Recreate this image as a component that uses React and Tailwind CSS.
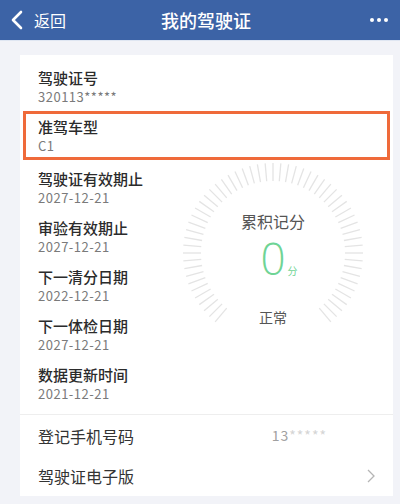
import React from 'react';

const font = { fontFamily: '"Noto Sans CJK SC", "Noto Sans", sans-serif' };

const infoRows = [
    { label: '驾驶证有效期止', value: '2027-12-21' },
    { label: '审验有效期止', value: '2027-12-21' },
    { label: '下一清分日期', value: '2022-12-21' },
    { label: '下一体检日期', value: '2027-12-21' },
    { label: '数据更新时间', value: '2021-12-21' },
];

function InfoItem({ label, value }) {
    return (
        <div className="flex flex-col">
            <span className="text-[15px] leading-[20px] font-medium text-[#2b2b2b]">{label}</span>
            <span className="text-[13px] leading-[18px] text-[#7a7a7a] tracking-[0.5px]">{value}</span>
        </div>
    );
}

function Gauge() {
    const cx = 93;
    const cy = 93;
    const ticks = [];
    for (let a = -140; a <= 140; a += 5) {
        const rad = (a * Math.PI) / 180;
        const sin = Math.sin(rad);
        const cos = Math.cos(rad);
        ticks.push(
            <line
                key={a}
                x1={cx + sin * 72}
                y1={cy - cos * 72}
                x2={cx + sin * 90}
                y2={cy - cos * 90}
                stroke="#e4e4e4"
                strokeWidth="1.3"
            />
        );
    }
    return (
        <div className="relative w-[186px] h-[186px] shrink-0">
            <svg className="absolute inset-0" width="186" height="186" viewBox="0 0 186 186">
                {ticks}
            </svg>
            <div className="relative flex flex-col items-center pt-[50px]">
                <span className="text-[16px] leading-[22px] text-[#555]">累积记分</span>
                <div className="flex items-baseline pl-[12px]">
                    <span className="text-[44px] leading-[52px] font-light text-[#6fd495]" style={{ fontFamily: '"Open Sans", sans-serif' }}>0</span>
                    <span className="text-[10px] leading-[12px] text-[#6fd495] ml-[2px]">分</span>
                </div>
                <span className="text-[14px] leading-[20px] text-[#555] mt-[23px]">正常</span>
            </div>
        </div>
    );
}

export default function App() {
    return (
        <div className="w-[400px] h-[504px] bg-[#f2f3f8] overflow-hidden" style={font}>
            {/* header */}
            <div className="h-[41px] bg-[#3c63a6] flex items-center px-[10px] text-white border-b border-[#dfe6f2]">
                <div className="flex items-center w-[90px]">
                    <svg width="14" height="20" viewBox="0 0 14 20">
                        <polyline points="11,2 3,10 11,18" fill="none" stroke="white" strokeWidth="2.6" strokeLinecap="round" strokeLinejoin="round" />
                    </svg>
                    <span className="text-[16px] ml-[10px] leading-[20px]">返回</span>
                </div>
                <div className="flex-1 text-center text-[18px] font-medium leading-[24px] pl-[12px]">我的驾驶证</div>
                <div className="w-[90px] flex justify-end pr-[2px] gap-[3px]">
                    <span className="w-[4px] h-[4px] rounded-full bg-white"></span>
                    <span className="w-[4px] h-[4px] rounded-full bg-white"></span>
                    <span className="w-[4px] h-[4px] rounded-full bg-white"></span>
                </div>
            </div>

            <div className="pl-[20px] pr-[7px] pt-[14px]">
                <div className="bg-white">
                    {/* main info */}
                    <div className="pt-[13px] pb-[11px] border-b border-[#eeeeee]">
                        <div className="pl-[18px]">
                            <InfoItem label="驾驶证号" value="320113*****" />
                        </div>
                        <div className="mx-[3px] mt-[5px] border-[3px] border-[#ef6a3a] pl-[12px] pt-[3px] pb-[2px]">
                            <InfoItem label="准驾车型" value="C1" />
                        </div>
                        <div className="flex">
                            <div className="w-[160px] pl-[18px] pt-[9px] flex flex-col gap-[11px]">
                                {infoRows.map((r) => (
                                    <InfoItem key={r.label} label={r.label} value={r.value} />
                                ))}
                            </div>
                            <Gauge />
                        </div>
                    </div>

                    {/* lower rows */}
                    <div className="flex items-center h-[41px] pl-[18px] pr-[20px]">
                        <span className="text-[16px] text-[#333] flex-1">登记手机号码</span>
                        <span className="text-[14px] text-[#a0a0a0] mr-[46px] tracking-[1px]">13<span className="text-[#d4d4d4]">*****</span></span>
                    </div>
                    <div className="flex items-center h-[40px] pl-[18px] pr-[18px]">
                        <span className="text-[16px] text-[#333] flex-1">驾驶证电子版</span>
                        <svg width="8" height="14" viewBox="0 0 8 14">
                            <polyline points="1,1 7,7 1,13" fill="none" stroke="#b5b5b5" strokeWidth="1.3" />
                        </svg>
                    </div>
                </div>
            </div>
        </div>
    );
}
